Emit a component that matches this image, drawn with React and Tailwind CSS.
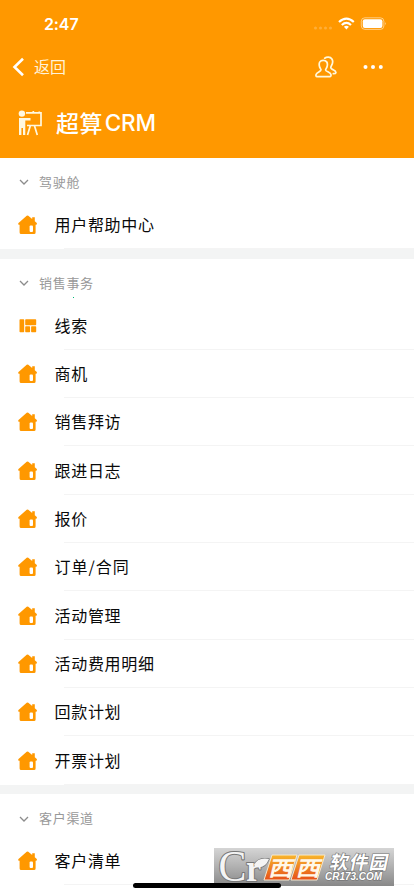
import React from "react";

const sections = [
  { title: "驾驶舱", items: ["用户帮助中心"] },
  {
    title: "销售事务",
    items: ["线索", "商机", "销售拜访", "跟进日志", "报价", "订单/合同", "活动管理", "活动费用明细", "回款计划", "开票计划"],
  },
  { title: "客户渠道", items: ["客户清单"] },
];

function HomeIcon() {
  return (
    <svg className="h-5 w-5 shrink-0" viewBox="0 0 20 20" fill="#ff9800">
      <path d="M8.700 .8 Q9.500 .2 10.300 .8 L14.200 4 V2.300 H16.800 V6.200 L18.800 8 Q19.300 9.600 18 9.700 H17.600 V17.600 Q17.600 19.100 16.100 19.100 H3.100 Q1.600 19.100 1.600 17.600 V9.700 H.9 Q-.3 9.300 .5 8 Z" />
      <rect x="11.600" y="10.500" width="3.400" height="6.600" rx="1" fill="#fff" />
    </svg>
  );
}

function BoardIcon() {
  return (
    <svg className="h-5 w-5 shrink-0" viewBox="0 0 20 20" fill="#ff9800">
      <rect x="1.500" y="3.300" width="4.700" height="13" rx=".7" />
      <rect x="7.200" y="3.300" width="11" height="5.900" rx=".7" />
      <rect x="7.200" y="10.200" width="4.900" height="6.100" rx=".7" />
      <rect x="13.100" y="10.200" width="5.100" height="6.100" rx=".7" />
    </svg>
  );
}

function StatusBar() {
  return (
    <div className="flex h-12 items-center justify-between pl-[44px] pr-[27px]">
      <span className="font-['Inter','Noto_Sans_CJK_SC',sans-serif] text-[16px] font-semibold leading-none tracking-[-.1px]">2:47</span>
      <svg className="h-4 w-[74px]" viewBox="0 0 74 16" fill="none">
        <g fill="#fff" opacity=".22">
          <circle cx="2.500" cy="12" r="1.500" /><circle cx="7.500" cy="12" r="1.500" />
          <circle cx="12.500" cy="12" r="1.500" /><circle cx="17.500" cy="12" r="1.500" />
        </g>
        <g stroke="#fff" strokeWidth="2.200">
          <path d="M26 6 Q33.400 -.8 40.800 6" />
          <path d="M28.800 9 Q33.400 4.900 38 9" />
        </g>
        <path d="M30.900 10.700 Q33.400 8.600 35.900 10.700 L33.400 13.400 Z" fill="#fff" />
        <rect x="48.300" y="1.800" width="22.600" height="11.600" rx="3.500" stroke="#fff" strokeOpacity=".5" />
        <rect x="49.800" y="3.300" width="19.600" height="8.600" rx="2" fill="#fff" />
        <path d="M72 6 Q73.600 7.600 72 9.200 Z" fill="#fff" fillOpacity=".6" />
      </svg>
    </div>
  );
}

function Header() {
  return (
    <header className="h-[158px] shrink-0 bg-[#ff9800] text-white">
      <StatusBar />
      <div className="flex h-[38px] items-center pl-[12px] pr-[30px]">
        <svg className="h-5 w-3" viewBox="0 0 12 20" fill="none" stroke="#fff" strokeWidth="2.600">
          <path d="M11 1.700 L2.500 10 L11 18.300" />
        </svg>
        <span className="mb-[2px] ml-[10px] flex-1 text-[16px] leading-5 text-[#fff3da]">返回</span>
        <svg className="mr-[25px] h-[22px] w-[22px]" viewBox="0 0 22 22" fill="none" stroke="#fff8dc" strokeWidth="1.700" strokeLinejoin="round" strokeLinecap="round">
          <path d="M8.200 4.400 C11.500 4.400 12.800 6.600 12.300 9.600 C12 11.700 11 12.700 10.600 13.800 C10.300 15.600 15.800 16.100 16 18.600 C16.100 20 15.700 20.700 14.800 20.700 H2 C.9 20.700 .8 19.500 1.100 18.500 C1.800 16.300 6 15.600 6 13.800 C5.600 12.700 4.600 11.700 4.300 9.600 C3.800 6.600 5 4.400 8.200 4.400 Z" />
          <path d="M9.700 2.200 C11.500 .9 15.300 .6 16.900 3 C18.300 5.300 17.300 8.400 16.300 10 C15.300 11.700 16 12.800 17.800 13.600 C19.900 14.600 21.200 15.600 20.900 16.800 C20.700 17.700 19.900 17.700 18.300 17.700" />
        </svg>
        <svg className="h-5 w-[22px]" viewBox="0 0 22 20" fill="#fff">
          <circle cx="3.500" cy="10" r="2" /><circle cx="11" cy="10" r="2" /><circle cx="18.800" cy="10" r="2" />
        </svg>
      </div>
      <div className="flex h-[74px] items-center pl-[18px]">
        <svg className="h-[26px] w-[25px]" viewBox="0 0 25 26" fill="none" stroke="#fff8e0" strokeWidth="1.700">
          <circle cx="3.900" cy="3.600" r="3.200" fill="#fff8e0" stroke="none" />
          <path d="M1 8 H12.500 V10.600 H7.300 V25 H5 V18 H3.400 V25 H1 Z" fill="#fff8e0" stroke="none" />
          <path d="M8 2.800 H23 V15.500 H9 M15.300 1 V3 M21.300 1.500 V3 M12.400 15.500 L9.500 25 M16.400 15.500 L19.300 25" />
        </svg>
        <h1 className="mb-0.5 ml-[13px] flex items-center text-[23px] font-medium leading-7">
          <span className="tracking-[.4px]">超算</span>
          <span className="ml-[2px] mt-0.5 font-['Inter','Noto_Sans_CJK_SC',sans-serif] text-[22.500px] tracking-[-.2px]">CRM</span>
        </h1>
      </div>
    </header>
  );
}

function Section({ title, items }) {
  return (
    <section className="shrink-0">
      <div className="flex h-[42.800px] items-center pl-[19px] pt-[6px]">
        <svg className="h-[10px] w-[10px]" viewBox="0 0 10 10" fill="none" stroke="#8c8c8c" strokeWidth="1.300">
          <path d="M1 3 L5 7 L9 3" />
        </svg>
        <h2 className="mb-px ml-[10px] text-[13px] leading-5 tracking-[.7px] text-[#999]">{title}</h2>
      </div>
      <ul>
        {items.map((item) => (
          <li key={item} className="flex h-[48.340px] items-center pl-[18px]">
            {item === "线索" ? <BoardIcon /> : <HomeIcon />}
            <span className={`mb-[2px] ml-[16.500px] w-[9.500px] shrink-0 whitespace-nowrap text-[16px] leading-6 text-[#090909] ${item.includes("/") ? "tracking-[1px]" : "tracking-[.7px]"}`}>{item}</span>
            <span className="h-full flex-1 border-b border-[#f4f4f4]" />
          </li>
        ))}
      </ul>
    </section>
  );
}

function Watermark() {
  return (
    <svg className="absolute left-[214px] top-[848px] h-[38px] w-[180px] overflow-visible" viewBox="0 0 180 38">
      <defs>
        <linearGradient id="plate" x1="0" y1="0" x2="0" y2="1"><stop stopColor="#d5d5d5" /><stop offset=".5" stopColor="#b0b0b0" /><stop offset="1" stopColor="#888" /></linearGradient>
        <linearGradient id="tile" x1="0" y1="0" x2="0" y2="1"><stop stopColor="#f8b62c" /><stop offset="1" stopColor="#e65018" /></linearGradient>
      </defs>
      <rect width="180" height="38" fill="url(#plate)" />
      <g className="font-['Liberation_Serif',serif]" strokeLinejoin="round">
        <g fill="#777" stroke="#777" strokeWidth="3.400">
          <path d="M40 17 Q44 9 55 11 Q51 21 42 19 Z" strokeWidth="1.400" />
        </g>
        <g fill="#f4f4f4" stroke="#777" strokeWidth="2.200" paintOrder="stroke">
          <text transform="translate(4.500 32.500) scale(.93 1)" fontSize="45" fontWeight="400">C</text>
          <text transform="translate(32 32.500) scale(.9 1)" fontSize="38" fontWeight="700">r</text>
        </g>
        <path d="M40 17 Q44 9 55 11 Q51 21 42 19 Z" fill="#f4f4f4" />
      </g>
      <path d="M58 7 H83 L75 32 H50 Z M85 7 H111 L103 32 H77 Z" fill="url(#tile)" stroke="#f5e8d0" strokeWidth="1" />
      <g className="font-['Noto_Sans_CJK_SC',sans-serif]" fontWeight="700" fill="#fff7e8">
        <text transform="translate(54 27.500) skewX(-14) scale(1 .86)" fontSize="24.500">西</text>
        <text transform="translate(81.500 27.500) skewX(-14) scale(1 .86)" fontSize="24.500">西</text>
        <text transform="translate(115 20.500) skewX(-12)" fontSize="18.500" textLength="58" fontWeight="700" fill="#fff" stroke="#777" strokeWidth="1.300" paintOrder="stroke">软件园</text>
      </g>
      <text className="font-['Liberation_Sans',sans-serif]" x="111" y="32" fontStyle="italic" fontWeight="700" fontSize="10.500" textLength="57" lengthAdjust="spacingAndGlyphs" fill="#fff" stroke="#777" strokeWidth="1.300" paintOrder="stroke">CR173.COM</text>
    </svg>
  );
}

export default function App() {
  return (
    <main className="relative flex h-[896px] w-[414px] flex-col overflow-hidden bg-white font-['Noto_Sans_CJK_SC',sans-serif]">
      <Header />
      {sections.map((section, i) => (
        <React.Fragment key={section.title}>
          {i > 0 && <div className="h-[9.500px] shrink-0 bg-[#f3f4f4]" />}
          <Section {...section} />
        </React.Fragment>
      ))}
      <i className="absolute left-[73px] top-[297px] h-px w-px bg-[#00b978]" />
      <Watermark />
      <div className="absolute left-[133px] top-[883px] h-[5px] w-[148px] rounded-full bg-black" />
    </main>
  );
}
